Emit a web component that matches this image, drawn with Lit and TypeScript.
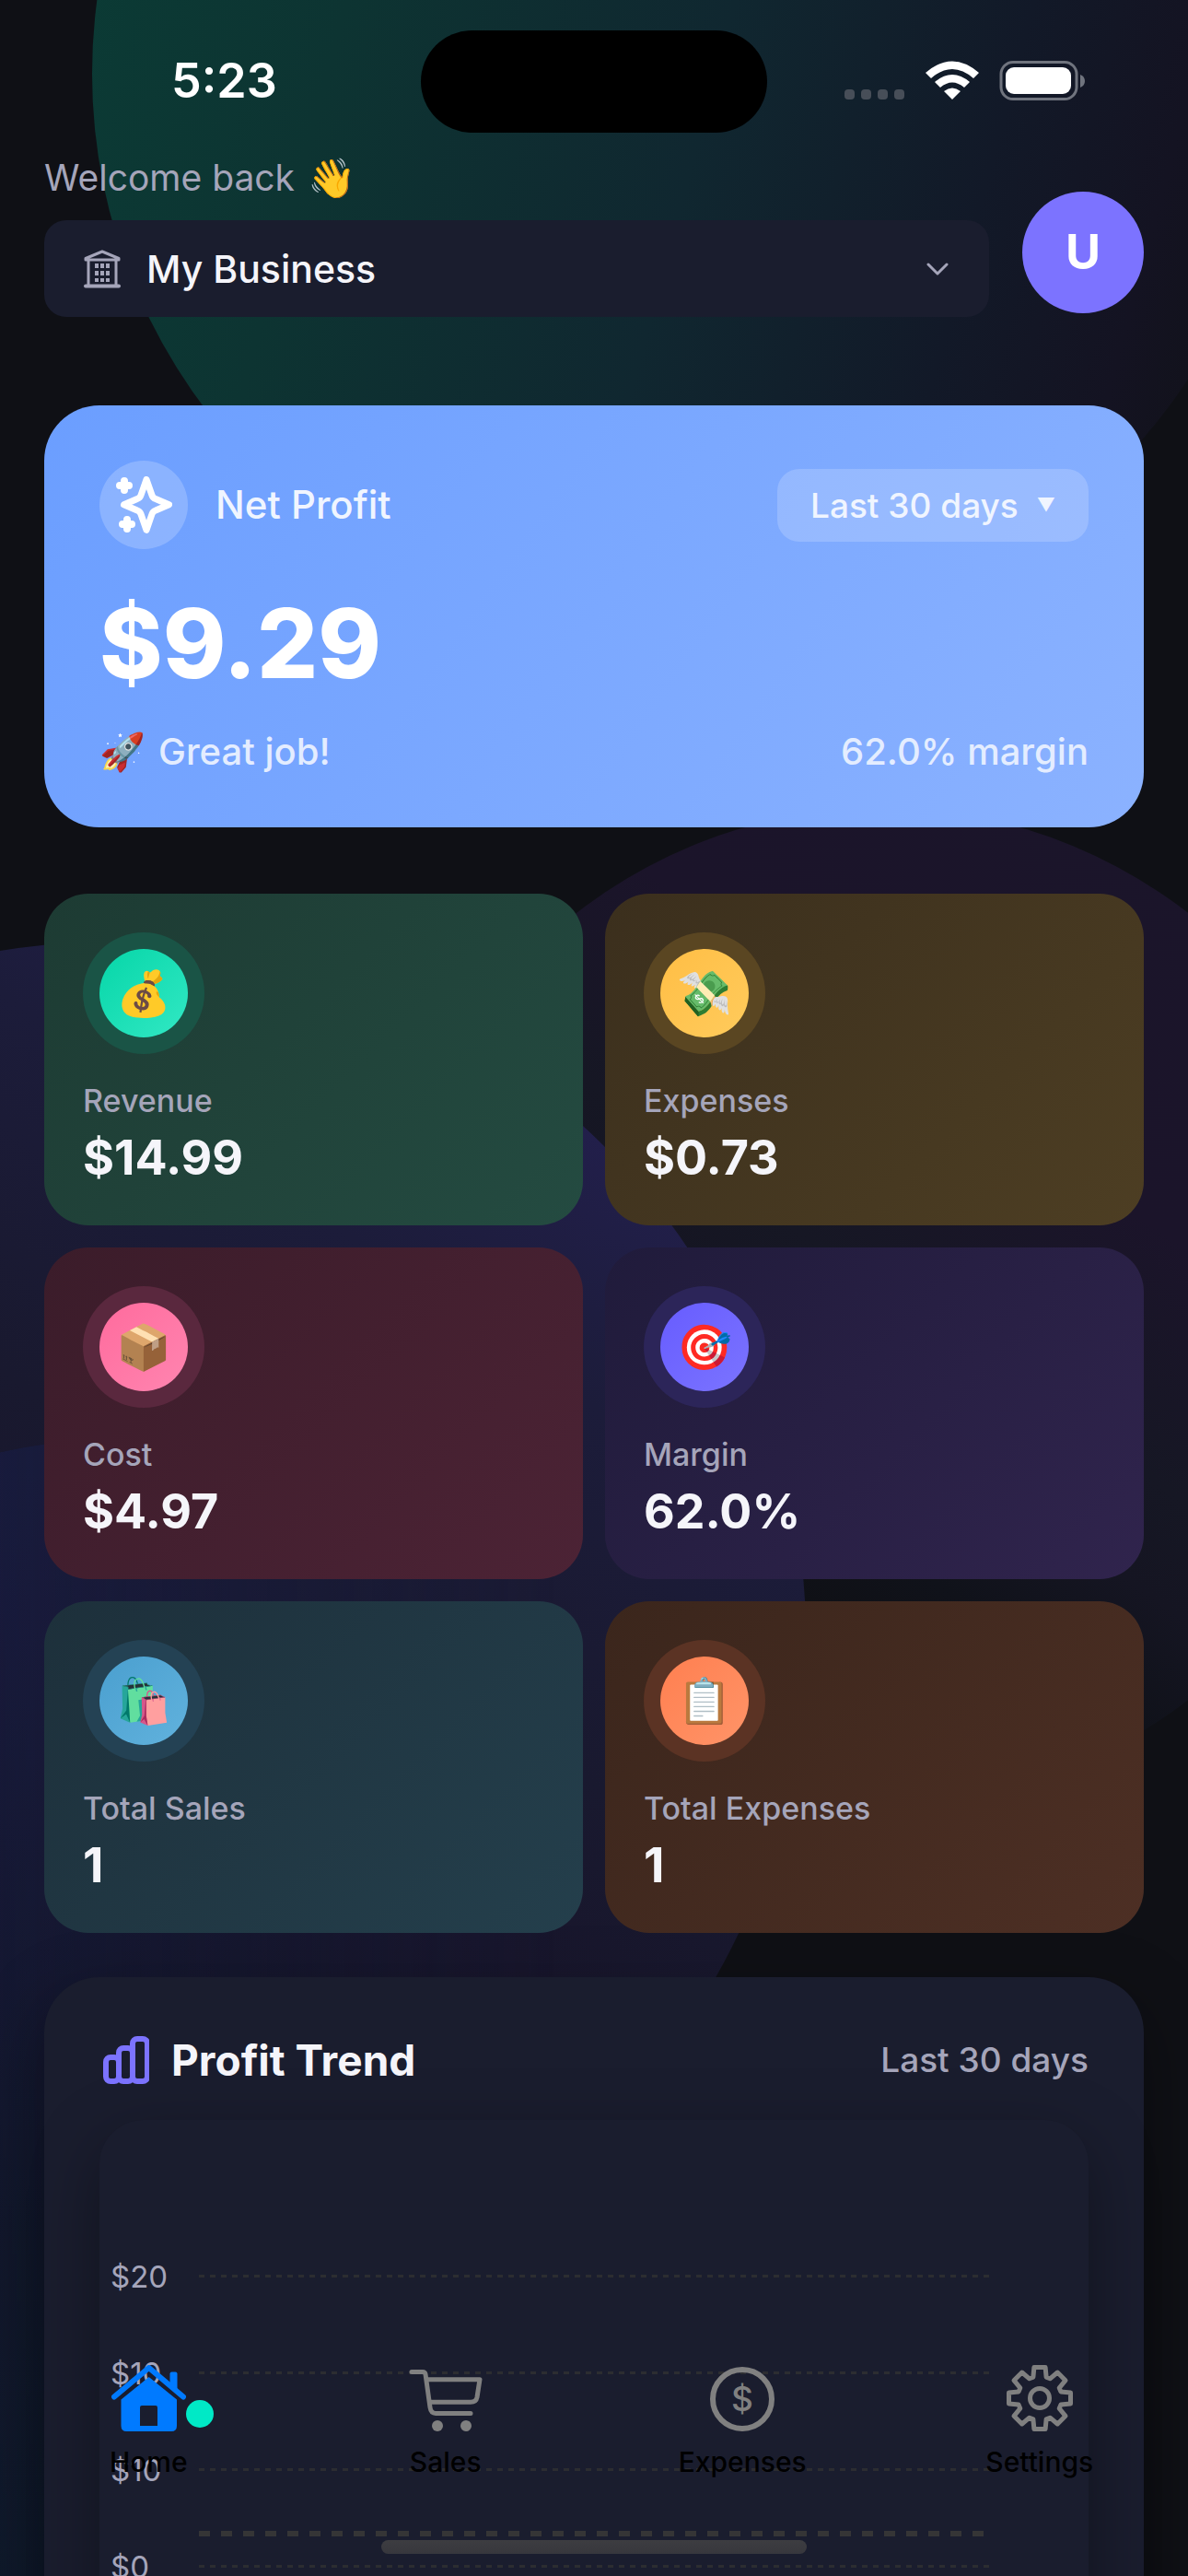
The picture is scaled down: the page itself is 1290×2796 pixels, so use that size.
import {html, css, svg, LitElement, TemplateResult} from 'lit';
import {customElement, state} from 'lit/decorators.js';
import {classMap} from 'lit/directives/class-map.js';

interface Stat {
  kind: string;
  emoji: string;
  label: string;
  value: string;
}

const STATS: Stat[] = [
  {kind: 'revenue', emoji: '💰', label: 'Revenue', value: '$14.99'},
  {kind: 'expenses', emoji: '💸', label: 'Expenses', value: '$0.73'},
  {kind: 'cost', emoji: '📦', label: 'Cost', value: '$4.97'},
  {kind: 'margin', emoji: '🎯', label: 'Margin', value: '62.0%'},
  {kind: 'sales', emoji: '🛍️', label: 'Total Sales', value: '1'},
  {kind: 'count', emoji: '📋', label: 'Total Expenses', value: '1'},
];

const TICKS = ['$20', '$10', '$10', '$0'];

// eight rounded teeth around (37, 36)
function gearPath() {
  const points: string[] = [];
  const teeth = 8;
  for (let i = 0; i < teeth; i++) {
    const a = (i * 2 * Math.PI) / teeth - Math.PI / 2;
    const corners = [[-0.3, 24], [-0.18, 34], [0.18, 34], [0.3, 24]];
    for (const [da, r] of corners) {
      points.push(`${(37 + r * Math.cos(a + da)).toFixed(1)} ${(36 + r * Math.sin(a + da)).toFixed(1)}`);
    }
  }
  return `M${points.join('L')}Z`;
}

const icons: Record<string, TemplateResult> = {
  home: html`<svg width="81" height="72" viewBox="0 0 81 72" aria-hidden="true">
    <path d="M3 34.5L40.7 3L78 34.5" fill="none" stroke="#007aff" stroke-width="6" stroke-linecap="round" stroke-linejoin="round"/>
    <path d="M63.5 21V9.5q0-2 2-2h4q2 0 2 2V28z" fill="#007aff"/>
    <path fill-rule="evenodd" d="M40.7 13L71 37.5V66q0 6-6 6H16.5q-6 0-6-6V37.5zM33 44q-2 0-2 2V66H50V46q0-2-2-2z" fill="#007aff"/>
  </svg>`,
  sales: html`<svg width="80" height="72" viewBox="0 -5 80 72" aria-hidden="true">
    <g fill="none" stroke="#808080" stroke-width="5" stroke-linecap="round" stroke-linejoin="round">
      <path d="M3 2.5H15Q17.5 2.5 18 5L23 41Q24 47.5 29 47.5H67"/>
      <path d="M19.5 10.7H77L74 30Q73 35.2 67 35.2H23"/>
    </g>
    <circle cx="31" cy="61" r="6" fill="#808080"/><circle cx="62" cy="61" r="6" fill="#808080"/>
  </svg>`,
  expenses: html`<svg width="72" height="72" viewBox="0 0 72 72" aria-hidden="true">
    <circle cx="36" cy="37" r="32" fill="none" stroke="#808080" stroke-width="6"/>
    <text x="36" y="50" text-anchor="middle" font-family="Inter, sans-serif" font-size="37" fill="#808080">$</text>
  </svg>`,
  settings: html`<svg width="74" height="72" viewBox="0 0 74 72" aria-hidden="true">
    <g fill="none" stroke="#808080" stroke-width="5" stroke-linejoin="round">
      <path d="${gearPath()}"/><circle cx="37" cy="36" r="10.5"/>
    </g>
  </svg>`,
};

const TABS = [
  {id: 'home', label: 'Home'},
  {id: 'sales', label: 'Sales'},
  {id: 'expenses', label: 'Expenses'},
  {id: 'settings', label: 'Settings'},
];

@customElement('stat-card')
export class StatCard extends LitElement {
  declare stat: Stat;

  static properties = {stat: {attribute: false}};

  static styles = css`
    :host {
      display: block;
    }

    .card {
      box-sizing: border-box;
      height: 360px;
      padding: 42px;
      border-radius: 48px;
    }

    .ring {
      display: flex;
      align-items: center;
      justify-content: center;
      width: 132px;
      height: 132px;
      border-radius: 50%;
      background: var(--ring);
    }

    .disc {
      display: flex;
      align-items: center;
      justify-content: center;
      width: 96px;
      height: 96px;
      border-radius: 50%;
      font-size: 48px;
      line-height: 56px;
      background: var(--disc);
    }

    .label {
      margin: 30px 0 0;
      font-size: 34px;
      font-weight: 500;
      line-height: 42px;
      color: #a5a5ba;
    }

    .value {
      margin: 8px 0 0;
      font-size: 52px;
      font-weight: 700;
      line-height: 66px;
      color: #f5f5fa;
    }

    .revenue {
      background: linear-gradient(135deg, #1d3b33, #244b41);
      --ring: #1a5446;
      --disc: linear-gradient(135deg, #06d6a8, #32e8c4);
    }

    .expenses {
      background: linear-gradient(135deg, #3b2f1d, #4d3e23);
      --ring: #5a4622;
      --disc: linear-gradient(135deg, #ffbe45, #ffcb5c);
    }

    .cost {
      background: linear-gradient(135deg, #3b1c2a, #4c2335);
      --ring: #5a283e;
      --disc: linear-gradient(135deg, #ff6b9d, #ff85b0);
    }

    .margin {
      background: linear-gradient(135deg, #201b3b, #30244d);
      --ring: #2c2559;
      --disc: linear-gradient(135deg, #675cff, #7b74ff);
    }

    .sales {
      background: linear-gradient(135deg, #1d303b, #243f4c);
      --ring: #244254;
      --disc: linear-gradient(135deg, #4a9fcf, #61b2dd);
    }

    .count {
      background: linear-gradient(135deg, #3b261c, #4d2f24);
      --ring: #5b3324;
      --disc: linear-gradient(135deg, #ff7f50, #ff9468);
    }
  `;

  render() {
    return html`
      <article class="card ${this.stat.kind}">
        <div class="ring"><div class="disc">${this.stat.emoji}</div></div>
        <p class="label">${this.stat.label}</p>
        <p class="value">${this.stat.value}</p>
      </article>
    `;
  }
}

@customElement('app-root')
export class AppRoot extends LitElement {
  @state() private activeTab = 'home';

  static styles = css`
    :host {
      display: block;
      position: relative;
      height: 100vh;
      overflow: hidden;
      font-family: Inter, "Noto Sans", "Liberation Sans", sans-serif;
      color: #f5f5fa;
      background: #0f1015;
    }

    * {
      box-sizing: border-box;
    }

    p, h2 {
      margin: 0;
    }

    svg {
      display: block;
    }

    /* decorative circles behind the page */
    .orb {
      position: absolute;
      border-radius: 50%;
    }

    .orb.green {
      width: 1290px;
      height: 1240px;
      left: 100px;
      top: -540px;
      background: linear-gradient(105deg, #0b3b35 6%, #0d3432 26%, #102730 52%, #121928 72%, #141322 84%, #101116 95%);
    }

    .orb.purple {
      width: 1082px;
      height: 1082px;
      left: 417px;
      top: 877px;
      background: linear-gradient(215deg, #1b152a 10%, #1b142a 34%, #161724 49%, #151522 56%, #10121a 64%, #0f1015 72%);
    }

    .orb.indigo {
      width: 1506px;
      height: 1506px;
      left: -631px;
      top: 1022px;
      background: linear-gradient(215deg, #221f4b 14%, #1c1c3a 26%, #19192f 42%, #18162c 52%, rgba(24, 22, 44, 0) 78%);
    }

    .orb.blue {
      width: 1500px;
      height: 1500px;
      left: -595px;
      top: 1560px;
      background: linear-gradient(rgba(24, 32, 80, .45), rgba(24, 32, 76, .45) 40%, rgba(15, 36, 66, .5) 85%);
      -webkit-mask-image: linear-gradient(90deg, #000 38%, transparent 80%);
      mask-image: linear-gradient(90deg, #000 38%, transparent 80%);
    }

    .scroller {
      position: relative;
      height: 100%;
      padding: 0 48px;
      overflow: hidden auto;
      scrollbar-width: none;
    }

    .status {
      position: relative;
      display: flex;
      align-items: center;
      justify-content: space-between;
      height: 166px;
      padding: 10px 62px 0 138px;
    }

    .time {
      font-size: 52px;
      font-weight: 600;
      line-height: 66px;
      color: #fff;
    }

    .island {
      position: absolute;
      left: 50%;
      top: 33px;
      width: 376px;
      height: 111px;
      margin-left: -188px;
      border-radius: 56px;
      background: #000;
    }

    .header {
      display: grid;
      grid-template-columns: 1fr auto;
      align-items: end;
      column-gap: 36px;
    }

    .welcome {
      display: flex;
      align-items: center;
      gap: 14px;
      height: 54px;
      font-size: 39px;
      line-height: 54px;
      color: #a5a5ba;
    }

    .welcome span {
      font-size: 42px;
    }

    .business {
      position: relative;
      display: flex;
      align-items: center;
      height: 105px;
      margin-top: 19px;
      border-radius: 24px;
      background: #1a1d2e;
    }

    .business svg {
      position: absolute;
      pointer-events: none;
    }

    .business .building {
      left: 42px;
    }

    .business .chevron {
      right: 44px;
    }

    select {
      appearance: none;
      border: 0;
      margin: 0;
      outline: none;
      background: transparent;
      font-family: inherit;
      cursor: pointer;
    }

    .business select {
      width: 100%;
      height: 100%;
      padding: 0 90px 0 111px;
      font-size: 41px;
      font-weight: 500;
      color: #f5f5fa;
    }

    .avatar {
      display: flex;
      align-items: center;
      justify-content: center;
      width: 132px;
      height: 132px;
      margin-bottom: 4px;
      padding: 0;
      border: 0;
      border-radius: 50%;
      font: 700 52px/66px Inter, sans-serif;
      color: #fff;
      background: #7c73ff;
    }

    .profit {
      display: flex;
      flex-direction: column;
      height: 458px;
      margin-top: 96px;
      padding: 60px;
      border-radius: 60px;
      background: linear-gradient(125deg, #6b9eff, #8bb2ff);
    }

    .row {
      display: flex;
      align-items: center;
      justify-content: space-between;
    }

    .name {
      display: flex;
      align-items: center;
      gap: 30px;
      font-size: 42px;
      font-weight: 500;
      line-height: 54px;
      color: #f0f5ff;
    }

    .spark {
      display: flex;
      align-items: center;
      justify-content: center;
      width: 96px;
      height: 96px;
      border-radius: 50%;
      background: rgba(255, 255, 255, .2);
    }

    .period {
      position: relative;
      display: flex;
      align-items: center;
      height: 79px;
      border-radius: 24px;
      color: #f0f5ff;
      background: rgba(255, 255, 255, .18);
    }

    .period select {
      height: 100%;
      padding: 0 76px 0 36px;
      font-size: 37px;
      font-weight: 500;
      color: inherit;
    }

    .period span {
      position: absolute;
      right: 36px;
      font-size: 20px;
      pointer-events: none;
    }

    .amount {
      margin-top: 36px;
      font-size: 104px;
      font-weight: 800;
      line-height: 132px;
      color: #fff;
    }

    .note {
      margin-top: 28px;
      font-size: 40px;
      font-weight: 500;
      line-height: 48px;
      color: #e4edff;
    }

    .note p {
      display: flex;
      gap: 14px;
    }

    .stats {
      display: grid;
      grid-template-columns: 1fr 1fr;
      gap: 24px;
      margin-top: 72px;
    }

    .trend {
      margin-top: 48px;
      padding: 60px 60px 300px;
      border-radius: 60px;
      background: #1a1d2e;
      box-shadow: 0 24px 72px rgba(0, 0, 0, .35);
    }

    .trend h2 {
      display: flex;
      align-items: center;
      gap: 24px;
      font-size: 46px;
      font-weight: 700;
      line-height: 60px;
    }

    .range {
      font-size: 37px;
      font-weight: 500;
      line-height: 48px;
      color: #a5a5ba;
    }

    .chart {
      position: relative;
      margin-top: 35px;
      padding: 117px 108px 60px 12px;
      border-radius: 48px;
      background: #1a1d2e;
      box-shadow: 0 24px 72px rgba(0, 0, 0, .35);
    }

    .tick {
      display: grid;
      grid-template-columns: 96px 1fr;
      align-items: center;
      height: 105px;
      font-size: 33px;
      color: #a5a5ba;
    }

    .line {
      height: 3px;
      background: repeating-linear-gradient(90deg, #2c2d31 0 6px, transparent 6px 12px);
    }

    .series {
      position: absolute;
      left: 108px;
      right: 108px;
      top: 446px;
      height: 6px;
      background: repeating-linear-gradient(90deg, #353536 0 12px, transparent 12px 24px);
    }

    .tabs {
      position: absolute;
      left: 0;
      right: 0;
      bottom: 0;
      display: grid;
      grid-template-columns: repeat(4, 1fr);
      height: 229px;
    }

    .tab {
      display: flex;
      flex-direction: column;
      align-items: center;
      gap: 13px;
      font-size: 30px;
      font-weight: 500;
      line-height: 40px;
      color: #000;
      text-decoration: none;
    }

    .icon {
      position: relative;
    }

    .tab.active .icon::after {
      content: "";
      position: absolute;
      left: 100%;
      bottom: 4px;
      width: 30px;
      height: 30px;
      border-radius: 50%;
      background: #00e9c6;
    }

    .indicator {
      position: absolute;
      left: 50%;
      bottom: 24px;
      width: 462px;
      height: 15px;
      margin-left: -231px;
      border-radius: 8px;
      background: linear-gradient(#3d3d41, #37373d);
    }
  `;

  selectTab(e: Event, id: string) {
    e.preventDefault();
    this.activeTab = id;
  }

  getStatus(): TemplateResult {
    return html`
      <div class="status">
        <span class="time">5:23</span>
        <div class="island"></div>
        <svg width="264" height="44" viewBox="0 0 264 44" aria-hidden="true">
          <g fill="#474e58">
            ${[0, 18, 36, 54].map((x) => svg`<rect x="${x + 1}" y="31" width="11" height="11" rx="4"/>`)}
          </g>
          <g fill="#fff">
            <path d="M89 13Q118-12 147 13L141 19Q118-1 95 19z"/>
            <path d="M99 23Q118 7 137 23L131 29Q118 18 105 29z"/>
            <path d="M109 33Q118 26 127 33L118 42z"/>
            <rect x="176" y="7" width="71" height="29" rx="9"/>
          </g>
          <rect x="171" y="1.5" width="82" height="40" rx="13" fill="none" stroke="#70747e" stroke-width="3"/>
          <path d="M257 15q5 2 5 7t-5 7z" fill="#70747e"/>
        </svg>
      </div>
    `;
  }

  getHeader(): TemplateResult {
    return html`
      <header class="header">
        <div>
          <p class="welcome">Welcome back <span>👋</span></p>
          <div class="business">
            <svg class="building" width="42" height="42" viewBox="0 0 42 42" aria-hidden="true">
              <g fill="none" stroke="#a5a5ba" stroke-width="3" stroke-linecap="round" stroke-linejoin="round">
                <path d="M3 11V9.5L21 2L39 9.5V11H3M6 11V38M36 11V38"/>
                <path d="M3 39.5H39" stroke-width="4"/>
              </g>
              <path d="M15 15V35M21 15V35M27 15V35" stroke="#a5a5ba" stroke-width="4" stroke-dasharray="5 3"/>
            </svg>
            <select aria-label="Business"><option>My Business</option></select>
            <svg class="chevron" width="24" height="14" viewBox="0 0 24 14" aria-hidden="true">
              <path d="M2 2L12 12L22 2" fill="none" stroke="#a5a5ba" stroke-width="3" stroke-linecap="round" stroke-linejoin="round"/>
            </svg>
          </div>
        </div>
        <button class="avatar" aria-label="Account">U</button>
      </header>
    `;
  }

  getProfit(): TemplateResult {
    return html`
      <section class="profit">
        <div class="row">
          <div class="name">
            <span class="spark">
              <svg width="62" height="62" viewBox="0 0 62 62" aria-hidden="true">
                <path d="M34 3.5L40 20.500Q41 23.500 44 24.500L58.500 30.800L44 37Q41 38 40 41L34 58.300L28 41Q27 38 24 37L9.500 30.800L24 24.500Q27 23.500 28 20.500z" fill="none" stroke="#fff" stroke-width="7" stroke-linejoin="round"/>
                <path d="M10 5V15M5 10H15M13 47V57M8 52H18" stroke="#fff" stroke-width="8" stroke-linecap="round"/>
              </svg>
            </span>
            Net Profit
          </div>
          <div class="period">
            <select aria-label="Period"><option>Last 30 days</option></select>
            <span>▼</span>
          </div>
        </div>
        <p class="amount">$9.29</p>
        <div class="row note">
          <p><span>🚀</span>Great job!</p>
          <p>62.0% margin</p>
        </div>
      </section>
    `;
  }

  getTrend(): TemplateResult {
    return html`
      <section class="trend">
        <div class="row">
          <h2>
            <svg width="54" height="54" viewBox="0 0 54 54" aria-hidden="true">
              <g fill="none" stroke="#7c73ff" stroke-width="6" stroke-linejoin="round">
                <rect x="7" y="24" width="14" height="26" rx="5"/>
                <rect x="21" y="14" width="15" height="36" rx="5"/>
                <rect x="36" y="4" width="16" height="46" rx="5"/>
              </g>
            </svg>
            Profit Trend
          </h2>
          <span class="range">Last 30 days</span>
        </div>
        <div class="chart">
          ${TICKS.map((t) => html`<div class="tick"><span>${t}</span><div class="line"></div></div>`)}
          <div class="series"></div>
        </div>
      </section>
    `;
  }

  render() {
    return html`
      <div class="orb green"></div>
      <div class="orb purple"></div>
      <div class="orb indigo"></div>
      <div class="orb blue"></div>

      <main class="scroller">
        ${this.getStatus()}
        ${this.getHeader()}
        ${this.getProfit()}
        <section class="stats">
          ${STATS.map((s) => html`<stat-card .stat=${s}></stat-card>`)}
        </section>
        ${this.getTrend()}
      </main>

      <nav class="tabs">
        ${TABS.map((t) => html`
          <a href="#${t.id}"
            class=${classMap({tab: true, active: t.id === this.activeTab})}
            @click=${(e: Event) => this.selectTab(e, t.id)}>
            <span class="icon">${icons[t.id]}</span>
            ${t.label}
          </a>
        `)}
        <div class="indicator"></div>
      </nav>
    `;
  }
}

declare global {
  interface HTMLElementTagNameMap {
    'app-root': AppRoot;
    'stat-card': StatCard;
  }
}
